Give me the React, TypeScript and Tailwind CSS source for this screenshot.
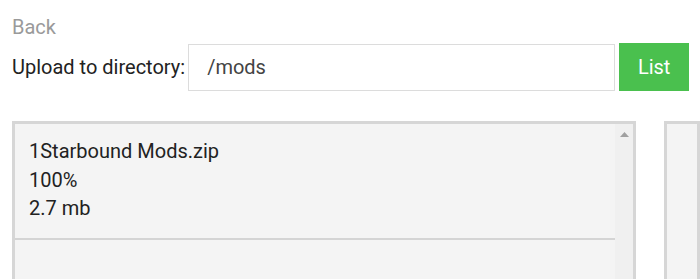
import React from "react";

export default function App() {
  return (
    <div className="w-[700px] h-[279px] overflow-hidden bg-white font-['Roboto',_'Liberation_Sans',_sans-serif]">
      <div className="pl-3 pt-[15px] text-[20px] leading-[24px] text-[#9a9a9a]">Back</div>
      <div className="mt-[4px] flex items-center pl-3">
        <span className="mr-[3px] text-[20px] leading-[24px] text-[#222]">Upload to directory:</span>
        <input
          readOnly
          value="/mods"
          className="h-[47px] w-[427px] border border-[#dcdcdc] bg-white px-[18px] text-[20px] text-[#444] outline-none"
        />
        <button className="ml-[4px] h-[48px] w-[70px] bg-[#4ac04e] text-[20px] text-white">List</button>
      </div>
      <div className="mt-[30px] flex gap-[28px] pl-3">
        <div className="flex h-[200px] w-[624px] shrink-0 border-[3px] border-[#d6d6d6] bg-[#f4f4f4]">
          <div className="flex-1">
            <div className="border-b-2 border-[#d4d4d4] px-[14px] pb-[15px] pt-[13px] text-[20px] leading-[28.5px] text-[#222]">
              <div>1Starbound Mods.zip</div>
              <div>100%</div>
              <div>2.7 mb</div>
            </div>
          </div>
          <div className="flex w-[18px] justify-center bg-[#f0f0f0] pt-[8px]">
            <svg width="9" height="5" viewBox="0 0 9 5">
              <polygon points="4.5,0 9,5 0,5" fill="#a0a0a0" />
            </svg>
          </div>
        </div>
        <div className="h-[200px] flex-1 border-[3px] border-[#d6d6d6] bg-[#f4f4f4]" />
      </div>
    </div>
  );
}
